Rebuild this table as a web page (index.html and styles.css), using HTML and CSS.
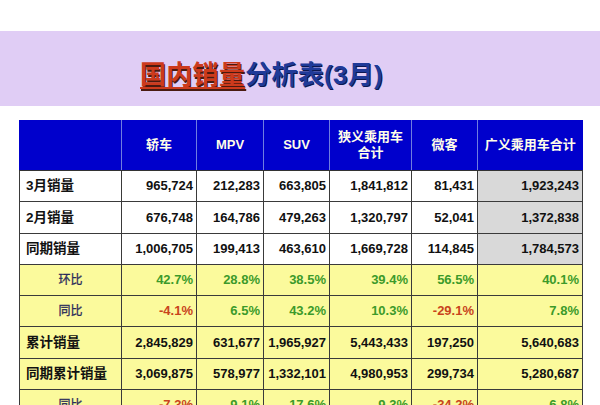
FILE: index.html
```html
<!DOCTYPE html>
<html lang="zh">
<head>
<meta charset="utf-8">
<link rel="stylesheet" href="styles.css">
</head>
<body>
<div class="band">
  <h1 class="title"><span class="red">国内销量</span><span class="blue">分析表(3月)</span></h1>
</div>
<table class="sheet">
  <colgroup>
    <col class="c0"><col class="c1"><col class="c2"><col class="c3"><col class="c4"><col class="c5"><col class="c6">
  </colgroup>
  <thead>
    <tr class="head">
      <th></th><th>轿车</th><th>MPV</th><th>SUV</th><th>狭义乘用车<br>合计</th><th>微客</th><th>广义乘用车合计</th>
    </tr>
  </thead>
  <tbody>
    <tr class="w"><td class="lab">3月销量</td><td>965,724</td><td>212,283</td><td>663,805</td><td>1,841,812</td><td>81,431</td><td class="g">1,923,243</td></tr>
    <tr class="w b"><td class="lab">2月销量</td><td>676,748</td><td>164,786</td><td>479,263</td><td>1,320,797</td><td>52,041</td><td class="g">1,372,838</td></tr>
    <tr class="w"><td class="lab">同期销量</td><td>1,006,705</td><td>199,413</td><td>463,610</td><td>1,669,728</td><td>114,845</td><td class="g">1,784,573</td></tr>
    <tr class="y"><td class="sub">环比</td><td class="up">42.7%</td><td class="up">28.8%</td><td class="up">38.5%</td><td class="up">39.4%</td><td class="up">56.5%</td><td class="up">40.1%</td></tr>
    <tr class="y"><td class="sub">同比</td><td class="dn">-4.1%</td><td class="up">6.5%</td><td class="up">43.2%</td><td class="up">10.3%</td><td class="dn">-29.1%</td><td class="up">7.8%</td></tr>
    <tr class="y b"><td class="lab">累计销量</td><td>2,845,829</td><td>631,677</td><td>1,965,927</td><td>5,443,433</td><td>197,250</td><td>5,640,683</td></tr>
    <tr class="y"><td class="lab">同期累计销量</td><td>3,069,875</td><td>578,977</td><td>1,332,101</td><td>4,980,953</td><td>299,734</td><td>5,280,687</td></tr>
    <tr class="y"><td class="sub">同比</td><td class="dn">-7.3%</td><td class="up">9.1%</td><td class="up">17.6%</td><td class="up">9.3%</td><td class="dn">-34.2%</td><td class="up">6.8%</td></tr>
  </tbody>
</table>
</body>
</html>
```
FILE: styles.css
```css
html, body {
  margin: 0;
  padding: 0;
  background: #ffffff;
  overflow: hidden;
}
body {
  width: 600px;
  height: 405px;
  font-family: "Liberation Sans", "Noto Sans CJK SC", sans-serif;
}
.band {
  margin-top: 31px;
  height: 75px;
  background: #e0cdf5;
  display: flex;
  align-items: center;
  padding-left: 140px;
  padding-top: 12px;
  box-sizing: border-box;
}
.title {
  margin: 0;
  font-size: 26px;
  font-weight: 700;
  line-height: 1;
  letter-spacing: 0.3px;
}
.red {
  color: #cc3a1c;
  text-decoration: underline;
  text-decoration-thickness: 2px;
  text-underline-offset: 3px;
  text-shadow: 1px 2px 0 #4a1a10;
}
.blue {
  color: #1f3a98;
  text-shadow: 1px 1px 0 #0c1850;
}
.sheet {
  margin: 14px 0 0 19px;
  border-collapse: collapse;
  table-layout: fixed;
  width: 563px;
  font-size: 13px;
  font-weight: 700;
  line-height: 16px;
  color: #111;
}
.c0 { width: 102px; }
.c1 { width: 75px; }
.c2 { width: 67px; }
.c3 { width: 66px; }
.c4 { width: 82px; }
.c5 { width: 66px; }
.c6 { width: 105px; }
.head th {
  background: #0000cc;
  color: #fffde8;
  height: 50px;
  padding: 0;
  font-size: 13px;
  font-weight: 700;
  line-height: 16px;
  border-left: 1px solid #6f7de0;
  border-bottom: 1px solid #333;
  text-align: center;
}
.head th:first-child { border-left: 1px solid #0000cc; }
td {
  height: 30px;
  padding: 0 3px 0 0;
  text-align: right;
  border: 1px solid #3a3a3a;
  white-space: nowrap;
}
tr.b td { height: 31px; }
.w td { background: #ffffff; }
.w td.g { background: #d9d9d9; }
.y td { background: #fbfa9c; }
td.lab {
  text-align: left;
  padding-left: 6px;
  font-size: 13.5px;
  font-weight: 700;
}
td.sub {
  text-align: center;
  padding: 0;
  font-size: 12px;
  font-weight: 400;
  color: #2a2a5a;
  -webkit-text-stroke: 0.3px #2a2a5a;
}
td.up { color: #3c9a2a; font-weight: 700; }
td.dn { color: #c8441c; }
```
